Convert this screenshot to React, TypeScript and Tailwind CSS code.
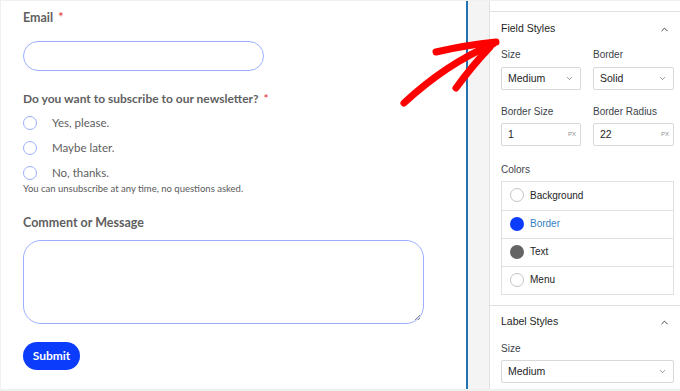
import { ChevronDown, ChevronUp } from 'lucide-react'

const FORM_FONT = { fontFamily: 'Lato, "Open Sans", sans-serif' }
const PANEL_FONT = { fontFamily: '"Liberation Sans", Arial, sans-serif' }

const RADIOS = ['Yes, please.', 'Maybe later.', 'No, thanks.']

const COLORS = [
  { name: 'Background', dot: 'bg-white border border-[#c3c4c7]', text: 'text-[#1e1e1e]' },
  { name: 'Border', dot: 'bg-[#0b3cfc]', text: 'text-[#3582c4]' },
  { name: 'Text', dot: 'bg-[#646464]', text: 'text-[#1e1e1e]' },
  { name: 'Menu', dot: 'bg-white border border-[#c3c4c7]', text: 'text-[#1e1e1e]' },
]

function Label({ children, required, size = 'text-[12.5px]' }: { children: React.ReactNode; required?: boolean; size?: string }) {
  return (
    <div className={`${size} font-bold leading-[16px] text-[#5f5f5f]`}>
      {children}
      {required && <span className="ml-[5px] font-normal text-[#e02b2b]">*</span>}
    </div>
  )
}

function Select({ value, className = '' }: { value: string; className?: string }) {
  return (
    <div className={`flex h-[23px] items-center justify-between rounded-[2px] border border-[#d7d8da] pl-[6px] pr-[6px] ${className}`}>
      <span className="text-[10.5px] text-[#1e1e1e]">{value}</span>
      <ChevronDown size={9} strokeWidth={1.6} className="text-[#50575e]" />
    </div>
  )
}

function PxInput({ value }: { value: string }) {
  return (
    <div className="flex h-[23px] items-center justify-between rounded-[2px] border border-[#d7d8da] pl-[6px] pr-[4px]">
      <span className="text-[10.5px] text-[#1e1e1e]">{value}</span>
      <span className="text-[6px] text-[#8c8f94]">PX</span>
    </div>
  )
}

function SectionHeader({ title }: { title: string }) {
  return (
    <div className="flex h-[14px] items-center justify-between pr-[4px]">
      <span className="text-[10.5px] text-[#1e1e1e]">{title}</span>
      <ChevronUp size={11} strokeWidth={1.8} className="text-[#1e1e1e]" />
    </div>
  )
}

function FieldLabel({ children }: { children: React.ReactNode }) {
  return <div className="h-[14px] text-[10px] leading-[14px] text-[#3c434a]">{children}</div>
}

export default function App() {
  return (
    <div className="relative flex h-[391px] w-[680px] overflow-hidden bg-[#f0f0f1] pb-[2px] pl-[1px] pt-[1px]">
      {/* form preview */}
      <div className="w-[465px] bg-white pl-[22px] pt-[9px]" style={FORM_FONT}>
        <Label required>Email</Label>
        <div className="mt-[15px] h-[30px] w-[241px] rounded-full border border-[#9daeff]" />

        <div className="mt-[20px]">
          <Label required size="text-[12px]">Do you want to subscribe to our newsletter?</Label>
        </div>
        <div className="mt-[8px] flex flex-col gap-[9px]">
          {RADIOS.map((r) => (
            <div key={r} className="flex h-[16px] items-center gap-[15px]">
              <span className="h-[14px] w-[14px] rounded-full border border-[#9daeff]" />
              <span className="text-[11.5px] text-[#606060]">{r}</span>
            </div>
          ))}
        </div>
        <div className="mt-[2px] text-[9.5px] leading-[12px] text-[#5a5a5a]">
          You can unsubscribe at any time, no questions asked.
        </div>

        <div className="mt-[20px]">
          <Label>Comment or Message</Label>
        </div>
        <div className="relative mt-[9px] h-[84px] w-[401px] rounded-[18px] border border-[#9daeff]">
          <svg className="absolute bottom-[2px] right-[2px]" width="7" height="7" viewBox="0 0 7 7">
            <path d="M1 6 L6 1 M4 6 L6 4" stroke="#8a8a8a" strokeWidth="1" />
          </svg>
        </div>

        <button className="mt-[18px] flex h-[28px] w-[57px] items-center justify-center rounded-full bg-[#0b3cfc] text-[12px] font-bold text-white">
          Submit
        </button>
      </div>

      {/* divider + gutter */}
      <div className="w-[2px] bg-[#2271b1]" />
      <div className="w-[21px] bg-[#f4f4f4]" />

      {/* settings panel */}
      <div className="flex-1 border-l border-[#e0e0e0] bg-white" style={PANEL_FONT}>
        <div className="h-[11px] border-b border-[#e0e0e0]" />

        <div className="border-b border-[#e0e0e0] pb-[10px] pl-[11px] pr-[6px] pt-[10px]">
          <SectionHeader title="Field Styles" />

          <div className="mt-[12px] grid grid-cols-[80px_81px] gap-x-[12px]">
            <div>
              <FieldLabel>Size</FieldLabel>
              <Select value="Medium" className="mt-[5px]" />
            </div>
            <div>
              <FieldLabel>Border</FieldLabel>
              <Select value="Solid" className="mt-[5px]" />
            </div>
          </div>

          <div className="mt-[15px] grid grid-cols-[80px_81px] gap-x-[12px]">
            <div>
              <FieldLabel>Border Size</FieldLabel>
              <div className="mt-[4px]">
                <PxInput value="1" />
              </div>
            </div>
            <div>
              <FieldLabel>Border Radius</FieldLabel>
              <div className="mt-[4px]">
                <PxInput value="22" />
              </div>
            </div>
          </div>

          <div className="mt-[17px]">
            <FieldLabel>Colors</FieldLabel>
          </div>
          <div className="mt-[4px] w-[173px] border border-[#e0e0e0]">
            {COLORS.map((c, i) => (
              <div
                key={c.name}
                className={`flex h-[28px] items-center gap-[6px] pb-[2px] pl-[8px] ${i > 0 ? 'border-t border-[#e0e0e0]' : ''}`}
              >
                <span className={`h-[14px] w-[14px] rounded-full ${c.dot}`} />
                <span className={`text-[10px] ${c.text}`}>{c.name}</span>
              </div>
            ))}
          </div>
        </div>

        <div className="pl-[11px] pr-[6px] pt-[9px]">
          <SectionHeader title="Label Styles" />
          <div className="mt-[13px]">
            <FieldLabel>Size</FieldLabel>
          </div>
          <Select value="Medium" className="mt-[4px] w-[173px]" />
        </div>
      </div>

      {/* red annotation arrow */}
      <svg className="pointer-events-none absolute left-0 top-0" width="680" height="391" viewBox="0 0 680 391">
        <g fill="none" stroke="#ff0000" strokeLinecap="round" strokeWidth="7">
          <path d="M404 103 Q446 64 493 44" />
          <path d="M436 52 Q466 45 496 42" />
          <path d="M456 88 Q472 66 490 47" />
        </g>
      </svg>
    </div>
  )
}
